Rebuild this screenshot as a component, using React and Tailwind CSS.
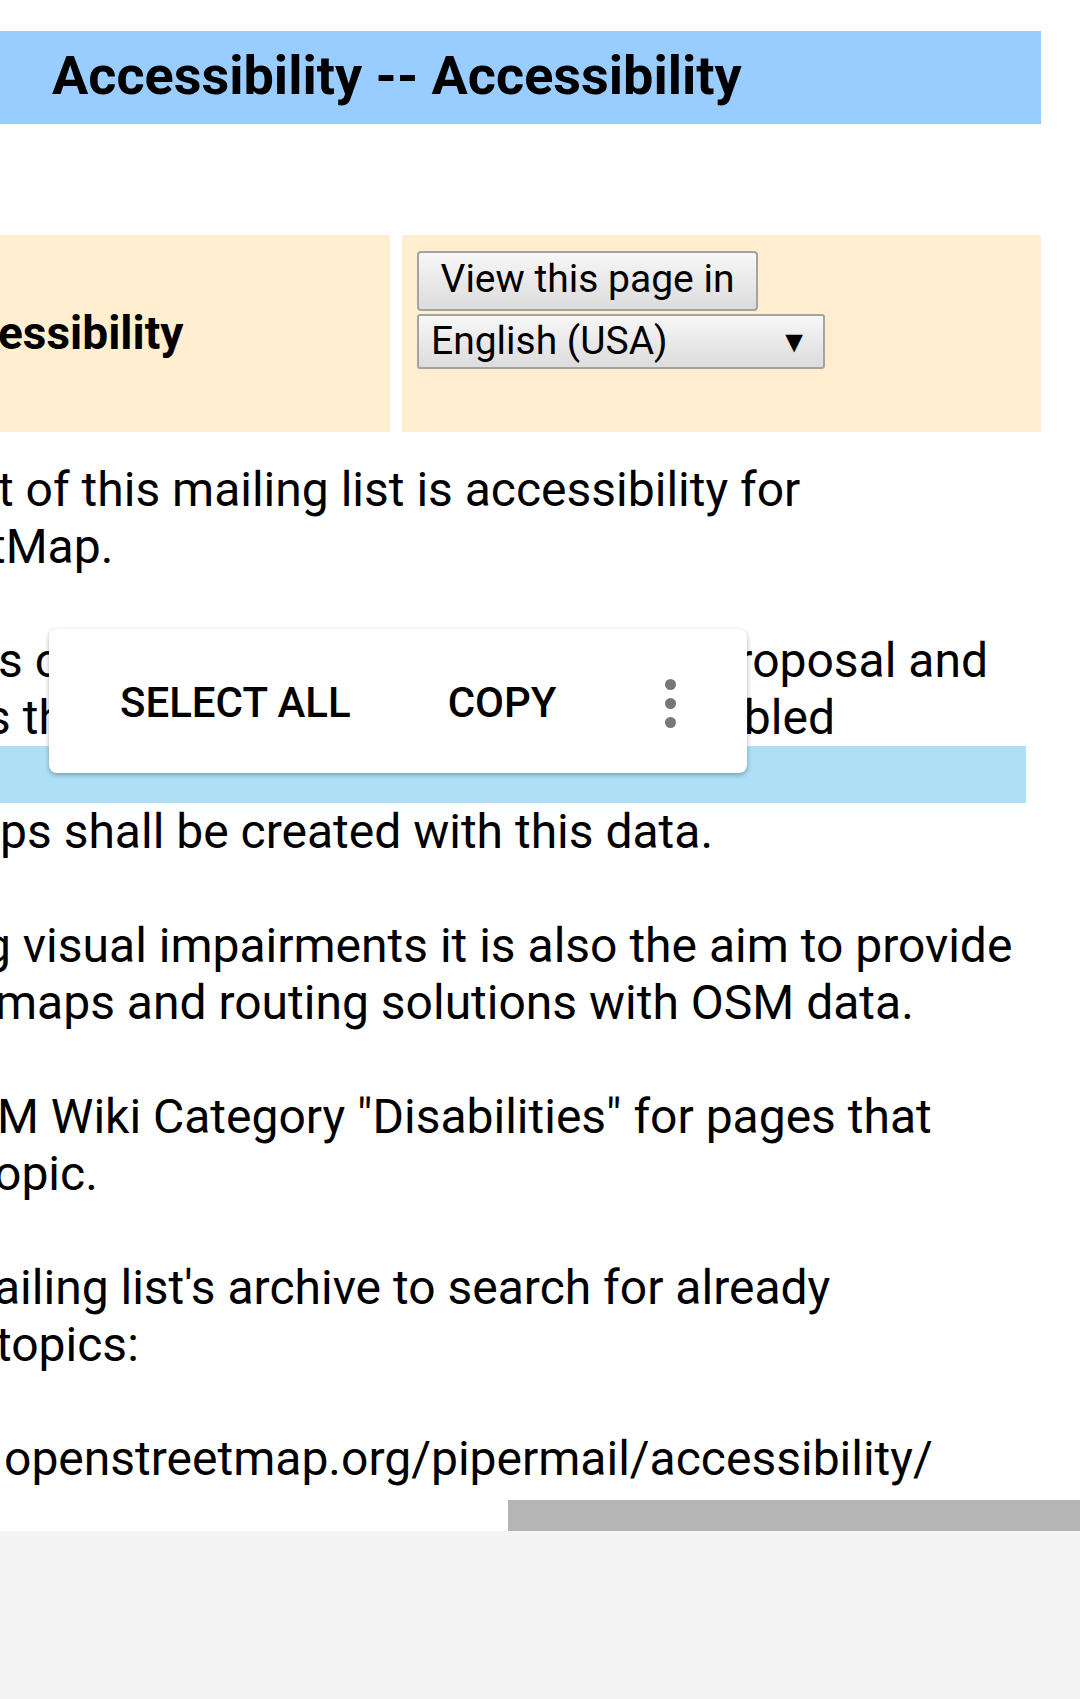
import React from "react";

const lines = [
  { t: "t of this mailing list is accessibility for", ml: "ml-[-2px]" },
  { t: "tMap.", ml: "ml-[-10px]" },
  { t: "\u00a0", ml: "" },
  { t: "s c", ml: "ml-[-2px]", right: "proposal and", mr: "mr-[92px]" },
  { t: "s th", ml: "ml-[-14px]", right: "disabled", mr: "mr-[245px]" },
  { t: "\u00a0", ml: "", blue: true },
  { t: "ps shall be created with this data.", ml: "ml-[0px]" },
  { t: "\u00a0", ml: "" },
  { t: "g visual impairments it is also the aim to provide", ml: "ml-[-16px]" },
  { t: "maps and routing solutions with OSM data.", ml: "ml-[-5px]" },
  { t: "\u00a0", ml: "" },
  { t: "M Wiki Category \"Disabilities\" for pages that", ml: "ml-[-3px]" },
  { t: "opic.", ml: "ml-[-6px]" },
  { t: "\u00a0", ml: "" },
  { t: "ailing list's archive to search for already", ml: "ml-[-6px]" },
  { t: "topics:", ml: "ml-[-4px]" },
  { t: "\u00a0", ml: "" },
  { t: "openstreetmap.org/pipermail/accessibility/", ml: "ml-[4px]" },
];

export default function App() {
  return (
    <div className="w-[1080px] h-[1699px] bg-[#f4f4f4] overflow-hidden relative font-['Roboto',sans-serif] text-black">
      <div className="bg-white h-[1531px] relative overflow-hidden">
        <div className="pt-[31px]">
          <div className="w-[1041px] h-[93px] bg-[#99ccff] flex items-center pl-[52px] pb-[4px]">
            <h1 className="text-[54px] font-bold leading-none whitespace-nowrap">
              Accessibility -- Accessibility
            </h1>
          </div>
        </div>

        <div className="mt-[111px] flex gap-[12px] w-[1041px] h-[197px]">
          <div className="w-[390px] shrink-0 bg-[#ffefd0] flex items-center overflow-hidden">
            <span className="ml-[-2px] text-[46px] font-bold whitespace-nowrap">essibility</span>
          </div>
          <div className="flex-1 bg-[#ffefd0] pl-[15px] pt-[16px] flex flex-col items-start gap-[3px]">
            <button className="w-[341px] h-[60px] rounded-[4px] border-2 border-[#a3a3a3] bg-gradient-to-b from-[#f7f7f7] to-[#dcdcdc] text-[39px] leading-none flex items-center justify-center pb-[4px]">
              View this page in
            </button>
            <div className="w-[408px] h-[55px] rounded-[3px] border-2 border-[#a3a3a3] bg-gradient-to-b from-[#f7f7f7] to-[#dcdcdc] text-[39px] leading-none flex items-center pl-[12px] pr-[14px] justify-between">
              <span>English (USA)</span>
              <span className="text-[30px]">▼</span>
            </div>
          </div>
        </div>

        <div className="mt-[29px] text-[48px] leading-[57px]">
          {lines.map((l, i) => (
            <div
              key={i}
              className={`h-[57px] whitespace-nowrap flex ${l.blue ? "bg-[#ade0f5] w-[1026px]" : ""}`}
            >
              <span className={`${l.ml} shrink-0`}>{l.t}</span>
              {l.right && (
                <span className={`ml-auto ${l.mr} shrink-0`}>{l.right}</span>
              )}
            </div>
          ))}
        </div>

        <div className="absolute left-[508px] right-0 bottom-0 h-[31px] bg-[#b5b5b5]" />
      </div>

      <div className="absolute left-[49px] top-[629px] w-[698px] h-[144px] bg-white rounded-[8px] shadow-[0_2px_5px_rgba(0,0,0,0.3)] flex items-center pt-[4px]">
        <span className="ml-[71px] text-[42px] font-medium leading-none">SELECT ALL</span>
        <span className="ml-[97px] text-[42px] font-medium leading-none">COPY</span>
        <div className="ml-[108px] flex flex-col gap-[8px]">
          <span className="block w-[11px] h-[11px] rounded-full bg-[#777]" />
          <span className="block w-[11px] h-[11px] rounded-full bg-[#777]" />
          <span className="block w-[11px] h-[11px] rounded-full bg-[#777]" />
        </div>
      </div>
    </div>
  );
}
